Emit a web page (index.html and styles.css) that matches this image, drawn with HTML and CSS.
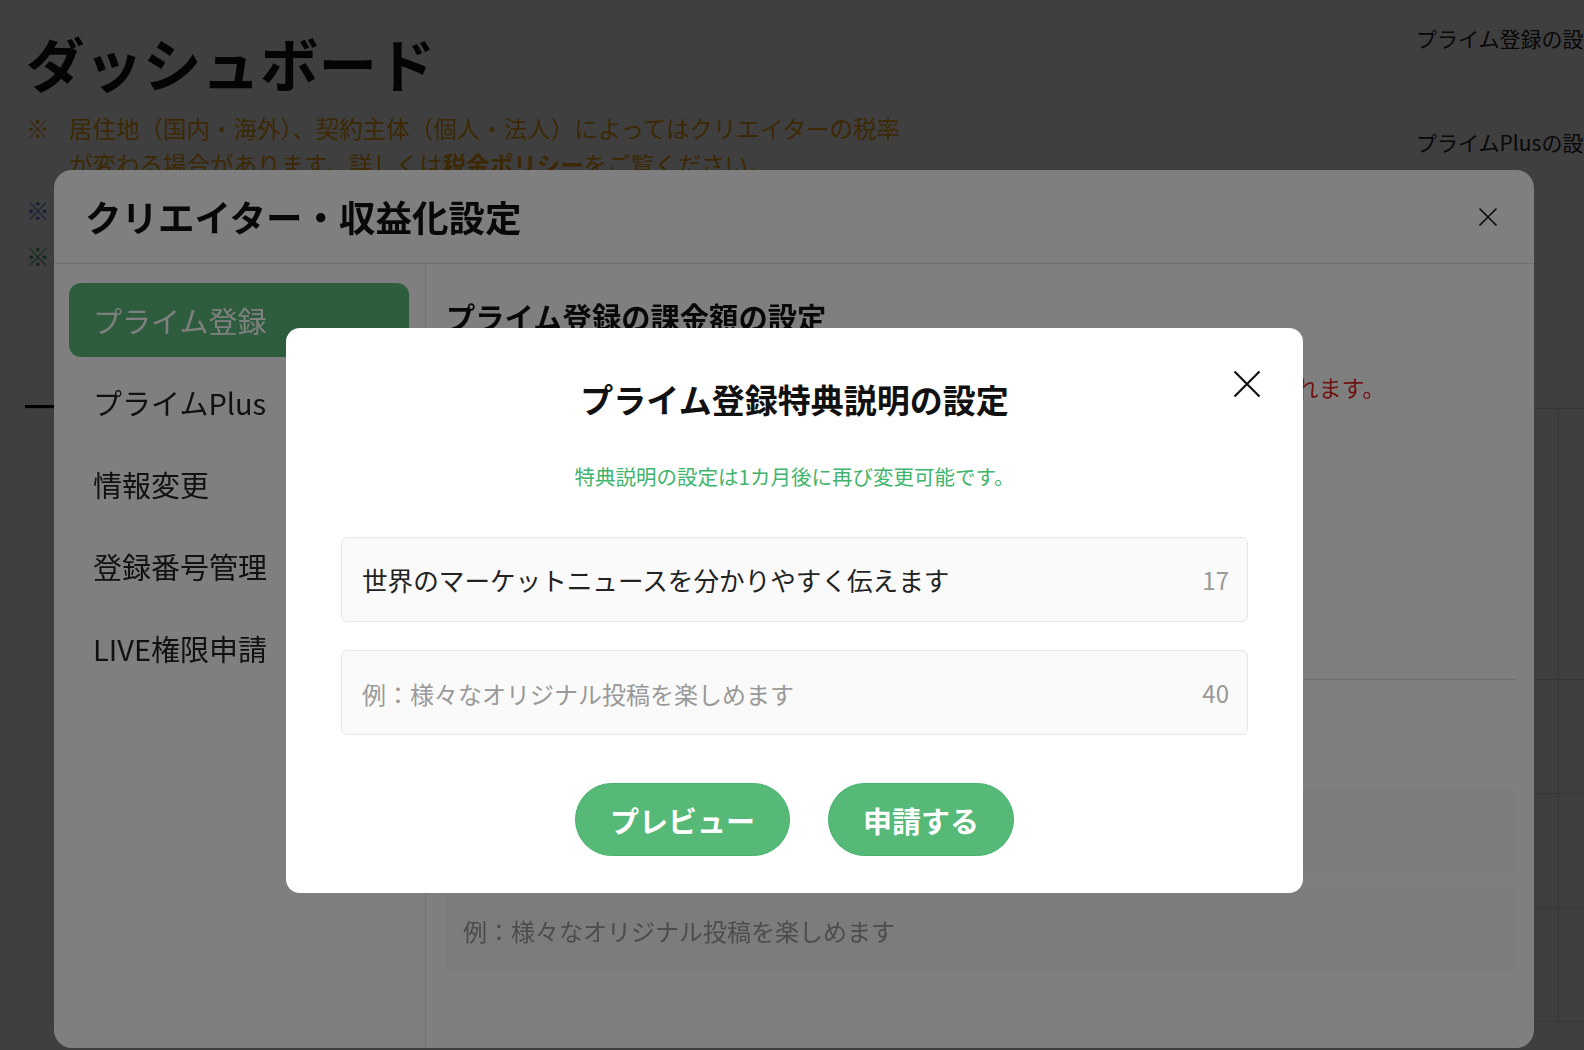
FILE: index.html
```html
<!DOCTYPE html>
<html lang="ja">
<head>
    <meta charset="UTF-8">
    <meta name="viewport" content="width=device-width, initial-scale=1.0">
    <title>ダッシュボード</title>
    <link rel="stylesheet" href="styles.css">
</head>
<body>

<div class="page">
    <div class="page-main">
        <h1 class="page-title">ダッシュボード</h1>
        <ul class="notes">
            <li class="note note-orange">
                <span class="note-mark">※</span>
                <span class="note-text">居住地（国内・海外）、契約主体（個人・法人）によってはクリエイターの税率が変わる場合があります。詳しくは<b>税金ポリシー</b>をご覧ください。</span>
            </li>
            <li class="note note-blue">
                <span class="note-mark">※</span>
                <span class="note-text">売上金の振込は毎月末締め、翌月末のお支払いとなります。</span>
            </li>
            <li class="note note-green">
                <span class="note-mark">※</span>
                <span class="note-text">プライム登録の売上は手数料を差し引いた金額が反映されます。</span>
            </li>
        </ul>
    </div>
    <aside class="page-side">
        <p class="side-link">プライム登録の設定</p>
        <p class="side-link">プライムPlusの設定</p>
    </aside>
</div>

<div class="tabs">
    <div class="tab active">売上</div>
    <div class="tab">会員</div>
</div>

<div class="stats">
    <div class="stats-row stats-row-head"><div class="stats-cell"></div><div class="stats-cell"></div></div>
    <div class="stats-row"><div class="stats-cell"></div><div class="stats-cell"></div></div>
    <div class="stats-row"><div class="stats-cell"></div><div class="stats-cell"></div></div>
    <div class="stats-row"><div class="stats-cell"></div><div class="stats-cell"></div></div>
</div>

<div class="overlay"></div>

<div class="modal-settings">
    <div class="settings-head">
        <h2 class="settings-title">クリエイター・収益化設定</h2>
        <button class="close-btn close-sm" aria-label="閉じる">
            <svg viewBox="0 0 20 20" width="20" height="20"><path d="M1.5 1.5L18.5 18.5M18.5 1.5L1.5 18.5" stroke="#111" stroke-width="1.6" fill="none"/></svg>
        </button>
    </div>
    <div class="settings-body">
        <nav class="settings-nav">
            <div class="nav-item active">プライム登録</div>
            <div class="nav-item">プライムPlus</div>
            <div class="nav-item">情報変更</div>
            <div class="nav-item">登録番号管理</div>
            <div class="nav-item">LIVE権限申請</div>
        </nav>
        <div class="settings-content">
            <h3 class="content-title">プライム登録の課金額の設定</h3>
            <p class="content-warn">※課金額を変更すると、プライム登録者には次回の更新日から新しい金額が適用されます。</p>
            <div class="price-block">
                <div class="price-label">月額（税込）</div>
                <div class="price-input">500円</div>
            </div>
            <div class="benefit-block">
                <div class="benefit-label">プライム登録特典説明</div>
                <div class="benefit-box benefit-box-filled">世界のマーケットニュースを分かりやすく伝えます</div>
                <div class="benefit-box">例：様々なオリジナル投稿を楽しめます</div>
            </div>
        </div>
    </div>
</div>

<div class="overlay"></div>

<div class="modal-benefit">
    <button class="close-btn close-lg" aria-label="閉じる">
        <svg viewBox="0 0 28 28" width="28" height="28"><path d="M1.5 1.5L26.5 26.5M26.5 1.5L1.5 26.5" stroke="#111" stroke-width="2.2" fill="none"/></svg>
    </button>
    <h2 class="benefit-title">プライム登録特典説明の設定</h2>
    <p class="benefit-note">特典説明の設定は1カ月後に再び変更可能です。</p>

    <label class="field">
        <input class="field-input" type="text" value="世界のマーケットニュースを分かりやすく伝えます">
        <span class="field-count">17</span>
    </label>
    <label class="field">
        <input class="field-input" type="text" placeholder="例：様々なオリジナル投稿を楽しめます">
        <span class="field-count">40</span>
    </label>

    <div class="benefit-actions">
        <button class="btn">プレビュー</button>
        <button class="btn">申請する</button>
    </div>
</div>

</body>
</html>
```

FILE: styles.css
```css
* {
    box-sizing: border-box;
}

body {
    margin: 0;
    width: 1584px;
    height: 1050px;
    overflow: hidden;
    font-family: "Noto Sans CJK JP", "Noto Sans", sans-serif;
    color: #222;
    background: #fff;
}

/* page behind the dialogs */

.page {
    display: flex;
    padding-left: 26px;
}

.page-main {
    flex: none;
    width: 1390px;
    padding-top: 27px;
}

.page-title {
    margin: 0;
    font-size: 58.5px;
    line-height: 70px;
    font-weight: 700;
    color: #111;
}

.notes {
    list-style: none;
    margin: 13px 0 0;
    padding: 0;
}

.note {
    display: flex;
    font-size: 23.5px;
    line-height: 36px;
}

.note + .note {
    margin-top: 10px;
}

.note-mark {
    flex: none;
    width: 43px;
}

.note-text {
    width: 840px;
}

.note-orange {
    color: #f2a20c;
}

.note-blue {
    color: #4d7fe0;
}

.note-green {
    color: #38a862;
}

.page-side {
    flex: none;
    width: 300px;
    padding-top: 23px;
}

.side-link {
    margin: 0 0 74px;
    font-size: 21px;
    line-height: 30px;
    color: #222;
    white-space: nowrap;
}

.tabs {
    display: flex;
    margin: 78px 0 0 25px;
    border-bottom: 1px solid #d8d8d8;
}

.tab {
    height: 56px;
    padding: 0 44px;
    display: flex;
    align-items: center;
    font-size: 22px;
    color: #666;
}

.tab.active {
    color: #111;
    border-bottom: 3px solid #000;
    margin-bottom: -1px;
}

.stats {
    margin-left: 70px;
}

.stats-row {
    display: grid;
    grid-template-columns: 1488px 300px;
    height: 114px;
    border-bottom: 1px solid #d8d8d8;
}

.stats-row-head {
    height: 271px;
}

.stats-cell {
    background: #f8f8f8;
}

.stats-cell + .stats-cell {
    border-left: 1px solid #d8d8d8;
    background: #fcfcfc;
}

.overlay {
    position: fixed;
    inset: 0;
    background: rgba(0, 0, 0, 0.5);
}

.close-btn {
    padding: 0;
    border: none;
    background: none;
    cursor: pointer;
    line-height: 0;
}

/* settings dialog */

.modal-settings {
    position: fixed;
    left: 54px;
    top: 170px;
    width: 1480px;
    height: 878px;
    display: flex;
    flex-direction: column;
    background: #fff;
    border-radius: 18px;
    overflow: hidden;
}

.settings-head {
    flex: none;
    height: 94px;
    display: flex;
    align-items: center;
    justify-content: space-between;
    padding: 0 36px 0 31px;
    border-bottom: 1px solid #e0e0e0;
}

.settings-title {
    margin: 0;
    font-size: 36.5px;
    line-height: 50px;
    font-weight: 700;
    color: #111;
}

.settings-body {
    flex: 1;
    display: flex;
}

.settings-nav {
    flex: none;
    width: 372px;
    padding: 19px 16px 0 15px;
    border-right: 1px solid #e0e0e0;
}

.nav-item {
    height: 74px;
    margin-bottom: 8px;
    padding-left: 24px;
    display: flex;
    align-items: center;
    border-radius: 12px;
    font-size: 29px;
    color: #222;
}

.nav-item.active {
    background: #5abb7b;
    color: #fff;
}

.settings-content {
    flex: 1;
    padding: 32px 18px 0 20px;
}

.content-title {
    margin: 0;
    font-size: 29.3px;
    line-height: 40px;
    font-weight: 700;
    color: #111;
}

.content-warn {
    margin: 35px 0 0;
    font-size: 23px;
    line-height: 32px;
    color: #e02424;
    white-space: nowrap;
}

.price-block {
    height: 276px;
    padding-top: 40px;
}

.price-label {
    font-size: 22px;
    line-height: 30px;
}

.price-input {
    width: 360px;
    height: 60px;
    margin-top: 16px;
    padding-left: 17px;
    display: flex;
    align-items: center;
    border: 1px solid #e0e0e0;
    border-radius: 6px;
    font-size: 24px;
}

.benefit-block {
    border-top: 1px solid #e0e0e0;
    padding-top: 40px;
}

.benefit-label {
    font-size: 22px;
    line-height: 30px;
    margin-bottom: 39px;
}

.benefit-box {
    height: 83px;
    padding-left: 17px;
    display: flex;
    align-items: center;
    background: #f8f8f8;
    border-radius: 6px;
    font-size: 24px;
    color: #999;
}

.benefit-box-filled {
    height: 82px;
    margin-bottom: 18px;
    color: #222;
}

/* benefit dialog */

.modal-benefit {
    position: fixed;
    left: 286px;
    top: 328px;
    width: 1017px;
    padding: 47px 55px 37px;
    background: #fff;
    border-radius: 14px;
}

.close-lg {
    position: absolute;
    top: 42px;
    right: 42px;
}

.benefit-title {
    margin: 0;
    font-size: 33px;
    line-height: 48px;
    font-weight: 700;
    text-align: center;
    color: #111;
}

.benefit-note {
    margin: 38px 0 0;
    font-size: 20.5px;
    line-height: 30px;
    text-align: center;
    color: #3fb46c;
}

.field {
    height: 85px;
    margin-top: 46px;
    padding: 0 18px 0 20px;
    display: flex;
    align-items: center;
    background: #fafafa;
    border: 1px solid #e6e6e6;
    border-radius: 6px;
}

.field + .field {
    margin-top: 28px;
}

.field-input {
    flex: 1;
    min-width: 0;
    padding: 0;
    border: none;
    outline: none;
    background: transparent;
    font-family: inherit;
    font-size: 25.6px;
    color: #222;
}

.field-input::placeholder {
    font-size: 24px;
    color: #999;
}

.field-count {
    margin-left: 16px;
    font-size: 24px;
    color: #999;
}

.benefit-actions {
    margin-top: 48px;
    display: flex;
    justify-content: center;
    gap: 38px;
}

.btn {
    height: 73px;
    padding: 0 34px;
    border: 1px solid #44b26c;
    border-radius: 37px;
    background: #57b977;
    color: #fff;
    font-family: inherit;
    font-size: 29px;
    font-weight: 700;
    cursor: pointer;
}
```
